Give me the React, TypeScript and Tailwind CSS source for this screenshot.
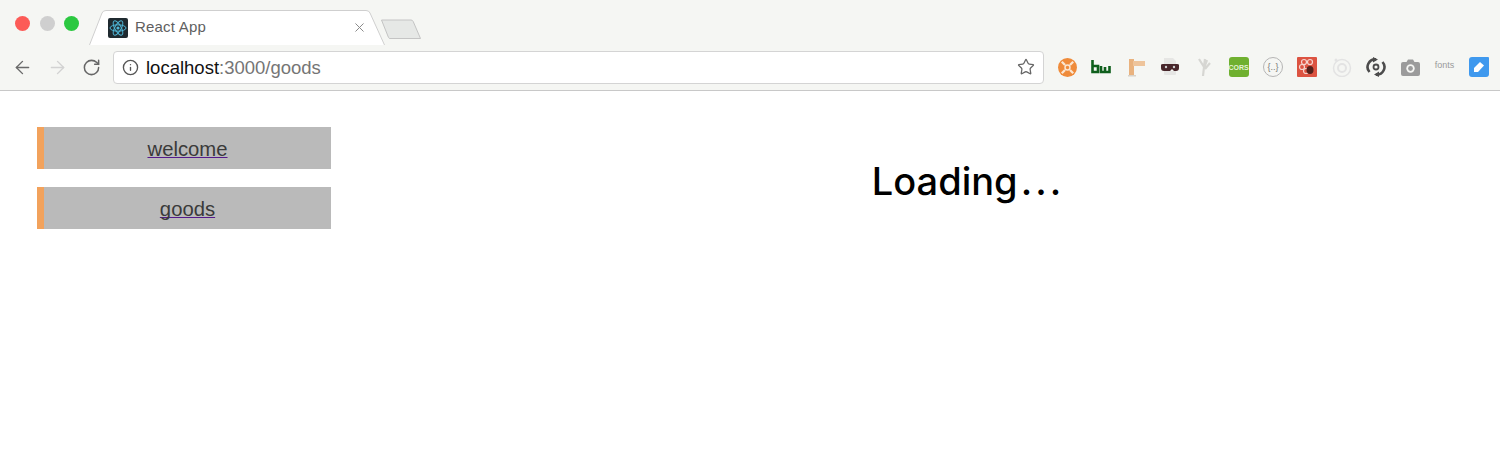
import { ArrowLeft, ArrowRight, RotateCw, Info, Star, X } from 'lucide-react'

const sans = "font-['Liberation_Sans',Arial,sans-serif]"

function ReactFavicon() {
  return (
    <svg width="20" height="20" viewBox="0 0 20 20" className="shrink-0">
      <rect width="20" height="20" rx="2" fill="#1f2a30" />
      <g fill="none" stroke="#4fb6d6" strokeWidth="1">
        <ellipse cx="10" cy="10" rx="8" ry="3.2" />
        <ellipse cx="10" cy="10" rx="8" ry="3.2" transform="rotate(60 10 10)" />
        <ellipse cx="10" cy="10" rx="8" ry="3.2" transform="rotate(120 10 10)" />
      </g>
      <circle cx="10" cy="10" r="1.6" fill="#4fb6d6" />
    </svg>
  )
}

function Tab() {
  return (
    <div className="relative ml-[88px] mt-[10px] h-[35px] w-[298px]">
      <svg width="298" height="35" viewBox="0 0 298 35" className="absolute inset-0">
        <path d="M1.5 35 L14 3 Q15 0.5 18 0.5 L278 0.5 Q281 0.5 282 3 L296.5 35 Z" fill="#fff" />
        <path d="M1.5 35 L14 3 Q15 0.5 18 0.5 L278 0.5 Q281 0.5 282 3 L296.5 35" fill="none" stroke="#cfcfcf" />
      </svg>
      <div className="relative flex h-full items-center pl-5 pr-[19px]">
        <ReactFavicon />
        <span className={`ml-[7px] flex-1 text-[15px] tracking-[0.2px] text-[#5f5f5f] ${sans}`}>React App</span>
        <X size={15} strokeWidth={1.6} className="text-[#8a8a8a]" />
      </div>
    </div>
  )
}

function NewTabButton() {
  return (
    <svg width="42" height="22" viewBox="0 0 42 22" className="ml-[-6px] mt-[19px]">
      <path d="M1.5 1 L31 1 Q32.5 1 33.2 2.5 L40.5 19.5 L10 19.5 Q9 19.5 8.5 18.5 Z" fill="#e6e8e6" stroke="#c4c4c4" />
    </svg>
  )
}

function OrangeIcon() {
  return (
    <svg width="19" height="19" viewBox="0 0 20 20">
      <circle cx="10" cy="10" r="10" fill="#ef8b3a" />
      <circle cx="10" cy="10" r="2.6" fill="none" stroke="#fbe6d0" strokeWidth="1.6" />
      <path d="M4 4l3.4 3.4M16 4l-3.4 3.4M4 16l3.4-3.4M16 16l-3.4-3.4" stroke="#fbe6d0" strokeWidth="2.4" />
    </svg>
  )
}

function BwIcon() {
  return (
    <svg width="20" height="14" viewBox="0 0 20 14" fill="none" stroke="#0f5f1c" strokeWidth="2.6">
      <path d="M1.5 0v12h5.5V6H1.5" />
      <path d="M10 6v6h4V7M14 12h4.5V6" />
    </svg>
  )
}

function PostIcon() {
  return (
    <svg width="18" height="19" viewBox="0 0 18 19">
      <rect x="2" y="1" width="5" height="16" fill="#e9b27e" />
      <rect x="6" y="3" width="12" height="5" fill="#eec49b" />
      <rect x="1" y="17" width="8" height="1.5" fill="#d9d2c8" />
    </svg>
  )
}

function MaskIcon() {
  return (
    <svg width="20" height="20" viewBox="0 0 20 20">
      <path d="M4 1h9l3 3v5H4zM4 14h12v3q0 1-1 1H5q-1 0-1-1z" fill="#e6e6e4" />
      <path d="M1 8q0-1 2-1h14q2 0 2 1v3q0 3-3 3h-2l-2-2-2 2H4q-3 0-3-3z" fill="#47262a" />
      <circle cx="6" cy="10" r="1.2" fill="#cfcfcf" />
      <circle cx="14" cy="10" r="1.2" fill="#cfcfcf" />
    </svg>
  )
}

function HandIcon() {
  return (
    <svg width="16" height="20" viewBox="0 0 16 20" fill="none" stroke="#d6d6d2" strokeWidth="2.2">
      <path d="M7 19l1-9M8 10L3 2M8 10l1-8M8 11l3-8M9 12l5-6" />
    </svg>
  )
}

function CorsIcon() {
  return (
    <div className={`flex h-5 w-5 items-center justify-center rounded-[3px] bg-[#6fb02f] text-[7px] font-bold leading-none text-[#e5f3d5] ${sans}`}>
      CORS
    </div>
  )
}

function BracesIcon() {
  return (
    <div className={`flex h-5 w-5 items-center justify-center rounded-full border border-[#b5b5b5] text-[9px] leading-none text-[#777] ${sans}`}>
      {'{..}'}
    </div>
  )
}

function BugIcon() {
  return (
    <svg width="20" height="20" viewBox="0 0 20 20">
      <rect width="20" height="20" rx="1" fill="#dc5341" />
      <g fill="none" stroke="#f6d5cf" strokeWidth="1.2">
        <circle cx="7" cy="5" r="2.5" />
        <circle cx="13" cy="5" r="2.5" />
        <circle cx="5" cy="10" r="2.5" />
        <circle cx="9" cy="14" r="2.5" />
      </g>
      <ellipse cx="13" cy="13" rx="3.5" ry="4" fill="#53211b" />
    </svg>
  )
}

function TargetIcon() {
  return (
    <svg width="20" height="20" viewBox="0 0 20 20" fill="none" stroke="#e3e3e3" strokeWidth="1.5">
      <circle cx="10" cy="11" r="8.5" />
      <circle cx="10" cy="11" r="4" strokeWidth="2" />
      <circle cx="4" cy="3" r="1.5" fill="#e3e3e3" stroke="none" />
    </svg>
  )
}

function SyncIcon() {
  return (
    <svg width="20" height="20" viewBox="0 0 20 20" fill="none" stroke="#4c4c4c" strokeWidth="2.6">
      <path d="M3.5 15A7.6 7.6 0 0 1 10 2.4" />
      <path d="M16.5 5A7.6 7.6 0 0 1 10 17.6" />
      <path d="M7 0l5 2.5L7 5.5zM13 14.5L8 17.5l5 2.5z" fill="#4c4c4c" stroke="none" />
      <circle cx="10" cy="10" r="2.5" strokeWidth="1.8" />
    </svg>
  )
}

function CameraIcon() {
  return (
    <svg width="19" height="17" viewBox="0 0 19 17">
      <path d="M2 3h3.5L7 0.5h5L13.5 3H17q2 0 2 2v10q0 2-2 2H2q-2 0-2-2V5q0-2 2-2z" fill="#9b9b9b" />
      <circle cx="9.5" cy="9.5" r="4.2" fill="#f5f6f3" />
      <circle cx="9.5" cy="9.5" r="2.4" fill="#9b9b9b" />
    </svg>
  )
}

function FontsIcon() {
  return <span className={`mb-1 text-[9px] leading-none text-[#9a9a9a] ${sans}`}>fonts</span>
}

function PencilIcon() {
  return (
    <svg width="20" height="20" viewBox="0 0 20 20">
      <path d="M3 0h16q1 0 1 1v16q0 3-3 3H3q-3 0-3-3V3q0-3 3-3z" fill="#3f99ee" />
      <path d="M5 11l6-6 4 3.5-6 6.5H5z" fill="#fff" />
    </svg>
  )
}

const EXTENSIONS = [
  <OrangeIcon />, <BwIcon />, <PostIcon />, <MaskIcon />, <HandIcon />, <CorsIcon />, <BracesIcon />,
  <BugIcon />, <TargetIcon />, <SyncIcon />, <CameraIcon />, <FontsIcon />, <PencilIcon />,
]

function Toolbar() {
  return (
    <div className="flex h-[46px] items-center border-b border-[#c8c8c8] pb-[1px]">
      <ArrowLeft size={21} strokeWidth={1.6} className="ml-[12px] text-[#6a6a6a]" />
      <ArrowRight size={21} strokeWidth={1.6} className="ml-[14px] text-[#d2d2d2]" />
      <RotateCw size={19} strokeWidth={1.9} className="ml-[14px] text-[#666]" />
      <div className="ml-[12px] flex h-[33px] w-[931px] items-center rounded-[4px] border border-[#d4d4d4] bg-white pl-[8px] pr-[8px]">
        <Info size={17} strokeWidth={1.9} className="text-[#555]" />
        <span className={`ml-[7px] mt-[1px] flex-1 text-[18.5px] text-[#111] ${sans}`}>
          localhost<span className="text-[#757575]">:3000/goods</span>
        </span>
        <Star size={18} strokeWidth={1.7} className="text-[#666]" />
      </div>
      <div className="ml-[6px] flex">
        {EXTENSIONS.map((icon, i) => (
          <div key={i} className="flex h-6 w-[34.3px] items-center justify-center">{icon}</div>
        ))}
      </div>
    </div>
  )
}

function NavItem({ label }: { label: string }) {
  return (
    <div className="flex h-[42px] w-[294px] items-center justify-center border-l-[7px] border-[#f2a25c] bg-[#bababa] pt-[2px]">
      <a
        href="#"
        className={`text-[20.3px] text-[#3a3a3a] underline decoration-[#551a8b] decoration-1 [text-decoration-skip-ink:none] ${sans}`}
      >
        {label}
      </a>
    </div>
  )
}

export default function App() {
  return (
    <div className="h-[457px] w-[1500px] overflow-hidden bg-white">
      <div className="bg-[#f5f6f3]">
        <div className="relative flex h-[45px]">
          <div className="absolute left-[15px] top-[16px] flex gap-[9.5px]">
            <span className="h-[15px] w-[15px] rounded-full bg-[#fc5b57]" />
            <span className="h-[15px] w-[15px] rounded-full bg-[#cfcfcf]" />
            <span className="h-[15px] w-[15px] rounded-full bg-[#2bc840]" />
          </div>
          <Tab />
          <NewTabButton />
        </div>
        <Toolbar />
      </div>
      <div className="flex">
        <div className="flex w-[436px] flex-col gap-[18px] pl-[37px] pt-[36px]">
          <NavItem label="welcome" />
          <NavItem label="goods" />
        </div>
        <div className="flex-1 pt-[64px] text-center">
          <h1 className="font-['Inter',sans-serif] text-[38px] font-medium leading-[52px] text-black">
            Loading<span className="ml-[3px] tracking-[3px]">...</span>
          </h1>
        </div>
      </div>
    </div>
  )
}
